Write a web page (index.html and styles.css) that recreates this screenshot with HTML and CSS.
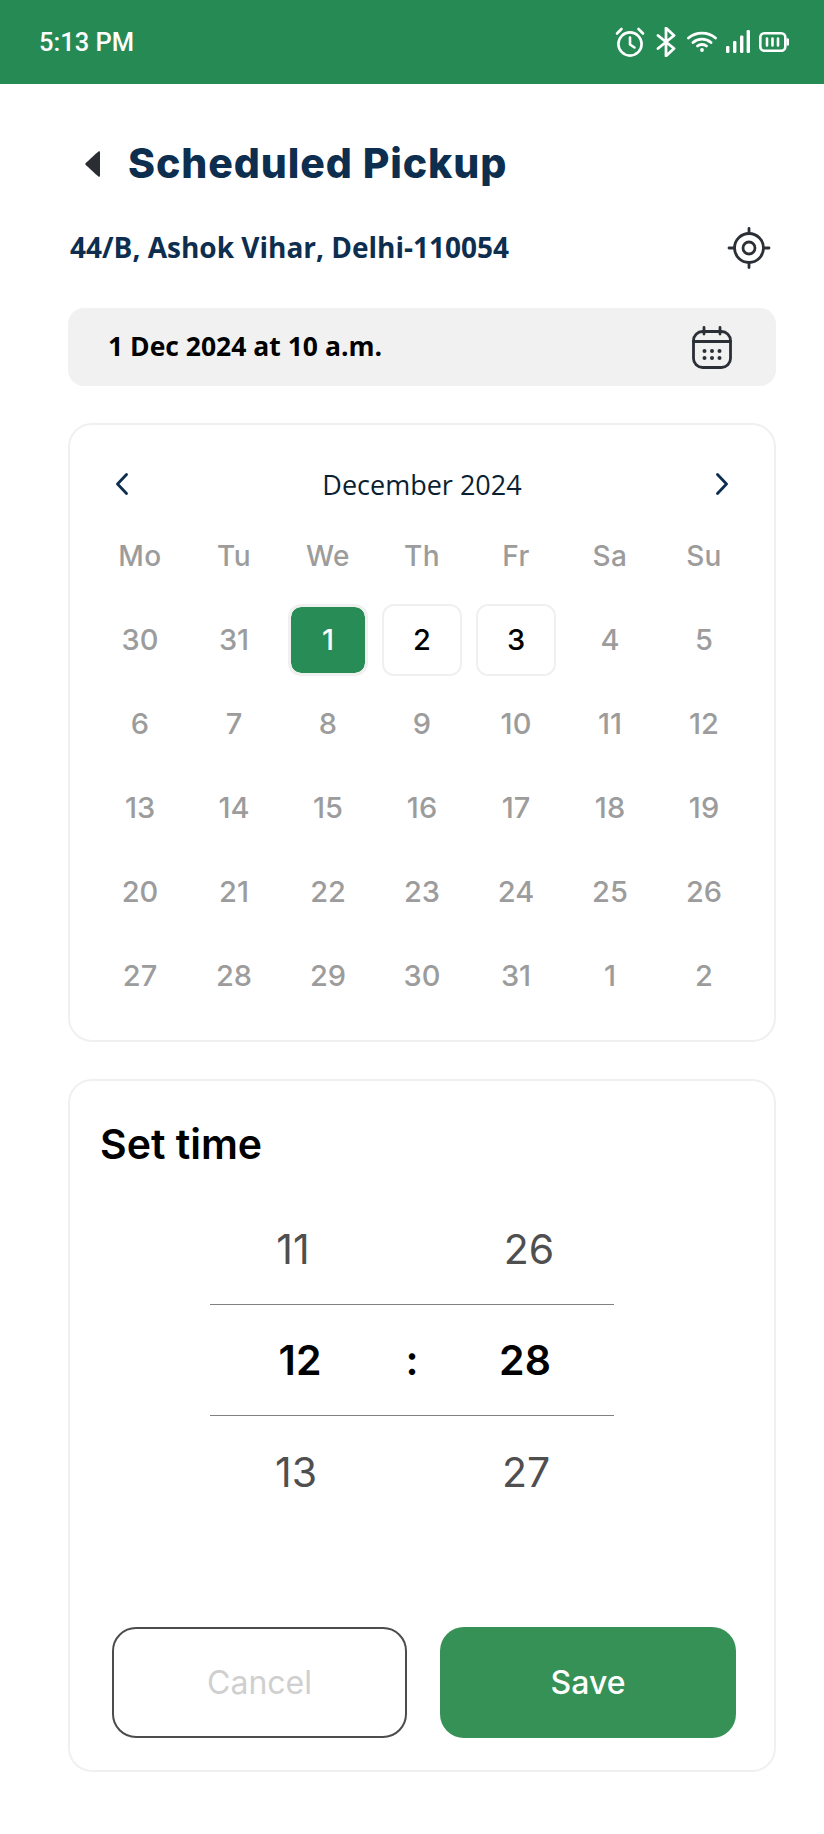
FILE: index.html
```html
<!DOCTYPE html>
<html lang="en">
<head>
<meta charset="utf-8">
<title>Scheduled Pickup</title>
<link rel="stylesheet" href="styles.css">
</head>
<body>
<div class="status">
  <span class="clock">5:13 PM</span>
  <div class="status-icons">
    <svg class="i-alarm" viewBox="0 0 30 30" fill="none" stroke="#fff" stroke-width="2.6" stroke-linecap="round" stroke-linejoin="round"><circle cx="15" cy="17" r="11.6"/><path d="M15 10.5V17.5L19.5 20.5M2 6.5L6.5 2M28 6.5L23.5 2"/></svg>
    <svg class="i-bt" viewBox="0 0 20 30" fill="none" stroke="#fff" stroke-width="2.8" stroke-linejoin="round" stroke-linecap="round"><path d="M2 8.5L18 21.5L10 29V1L18 8.5L2 21.5"/></svg>
    <svg class="i-wifi" viewBox="0 0 30 21" fill="none" stroke="#fff" stroke-width="2.8" stroke-linecap="round"><path d="M1.5 7C9 .5 21 .5 28.5 7M6 11.5C11 7 19 7 24 11.5M10.5 15C13 13 17 13 19.5 15"/><circle cx="15" cy="19" r="1.9" fill="#fff" stroke="none"/></svg>
    <svg class="i-signal" viewBox="0 0 24 23" fill="#fff"><rect x="0" y="16" width="3.4" height="7" rx="1.2"/><rect x="7" y="11" width="3.4" height="12" rx="1.2"/><rect x="14" y="5.500" width="3.400" height="17.500" rx="1.2"/><rect x="20.600" y="0" width="3.400" height="23" rx="1.2"/></svg>
    <svg class="i-batt" viewBox="0 0 30 20" fill="none" stroke="#fff" stroke-width="2.6" stroke-linecap="round"><rect x="1.3" y="1.300" width="25" height="17.400" rx="4"/><path d="M28.700 7.500V12.500M8 6.500V13.500M13.500 6.500V13.500M19 6.500V13.500"/></svg>
  </div>
</div>

<main class="page">
  <header class="title-row">
    <svg class="back" viewBox="0 0 15 28"><path d="M13.500 1.500C14.500 .8 15 1.500 15 2.500V25.500C15 26.500 14.500 27.200 13.500 26.500C11 24.500 3 17 .8 15C.2 14.300 .2 13.700 .8 13C3 11 11 3.500 13.500 1.500Z" fill="#2a2e33"/></svg>
    <h1 class="title">Scheduled Pickup</h1>
  </header>

  <div class="address-row">
    <span class="address">44/B, Ashok Vihar, Delhi-110054</span>
    <svg class="i-target" viewBox="0 0 44 42" fill="none" stroke="#2b2f36" stroke-width="2.800" stroke-linecap="round"><circle cx="22" cy="21" r="14.500"/><circle cx="22" cy="21" r="6"/><path d="M22 1.500V6.500M22 35.500V40.500M2 21H7.500M36.500 21H42"/></svg>
  </div>

  <div class="date-bar">
    <span class="date-text">1 Dec 2024 at 10 a.m.</span>
    <svg class="i-cal" viewBox="0 0 40 43" fill="none" stroke="#2b2f36" stroke-width="2.800" stroke-linecap="round"><rect x="1.500" y="5.500" width="37" height="36" rx="9"/><path d="M1.500 15.500H38.500M12 1.500V8M28 1.500V8"/><g fill="#2b2f36" stroke="none"><circle cx="12.500" cy="25" r="2"/><circle cx="20" cy="25" r="2"/><circle cx="27.500" cy="25" r="2"/><circle cx="12.500" cy="32" r="2"/><circle cx="20" cy="32" r="2"/><circle cx="27.500" cy="32" r="2"/></g></svg>
  </div>

  <section class="card calendar">
    <div class="month-row">
      <svg class="chev" viewBox="0 0 12 22" fill="none" stroke="#0d2e4f" stroke-width="2.800" stroke-linecap="round" stroke-linejoin="round"><path d="M10.500 1.500L1.500 11L10.500 20.500"/></svg>
      <span class="month">December 2024</span>
      <svg class="chev" viewBox="0 0 12 22" fill="none" stroke="#0d2e4f" stroke-width="2.800" stroke-linecap="round" stroke-linejoin="round"><path d="M1.500 1.500L10.500 11L1.500 20.500"/></svg>
    </div>
    <div class="weekdays">
      <span>Mo</span><span>Tu</span><span>We</span><span>Th</span><span>Fr</span><span>Sa</span><span>Su</span>
    </div>
    <div class="days">
      <span class="day">30</span><span class="day">31</span><span class="day selected">1</span><span class="day open">2</span><span class="day open">3</span><span class="day">4</span><span class="day">5</span>
      <span class="day">6</span><span class="day">7</span><span class="day">8</span><span class="day">9</span><span class="day">10</span><span class="day">11</span><span class="day">12</span>
      <span class="day">13</span><span class="day">14</span><span class="day">15</span><span class="day">16</span><span class="day">17</span><span class="day">18</span><span class="day">19</span>
      <span class="day">20</span><span class="day">21</span><span class="day">22</span><span class="day">23</span><span class="day">24</span><span class="day">25</span><span class="day">26</span>
      <span class="day">27</span><span class="day">28</span><span class="day">29</span><span class="day">30</span><span class="day">31</span><span class="day">1</span><span class="day">2</span>
    </div>
  </section>

  <section class="card time">
    <h2 class="time-title">Set time</h2>
    <div class="picker">
      <span class="n h-11">11</span><span></span><span class="n m-26">26</span>
      <span class="n now h-12">12</span><span class="now colon">:</span><span class="n now m-28">28</span>
      <span class="n h-13">13</span><span></span><span class="n m-27">27</span>
    </div>
    <div class="actions">
      <button class="btn cancel" type="button">Cancel</button>
      <button class="btn save" type="button">Save</button>
    </div>
  </section>
</main>
</body>
</html>
```

FILE: styles.css
```css
* { box-sizing: border-box; }
html, body { margin: 0; padding: 0; }
body {
  width: 824px;
  height: 1834px;
  background: #fff;
  font-family: "Inter", "Liberation Sans", sans-serif;
  overflow: hidden;
}

.status {
  height: 84px;
  background: #268a55;
  display: flex;
  align-items: center;
  justify-content: space-between;
  padding: 0 35px 0 39px;
  color: #fff;
}
.clock { font: 500 25.5px "Roboto", sans-serif; margin-top: -1px; }
.status-icons { display: flex; align-items: center; margin-top: -1px; }
.status-icons svg { display: block; flex: none; }
.i-alarm { width: 30px; height: 30px; margin-right: 11px; }
.i-bt { width: 20px; height: 30px; margin-right: 11px; }
.i-wifi { width: 30px; height: 21px; margin-right: 9px; }
.i-signal { width: 24px; height: 23px; margin-right: 9px; }
.i-batt { width: 30px; height: 20px; }

.page { padding: 0 48px 0 68px; }

.title-row {
  display: flex;
  align-items: center;
  height: 60px;
  margin-top: 50px;
  padding-left: 17px;
}
.back { width: 15px; height: 28px; flex: none; }
.title {
  margin: -3px 0 0 28px;
  font: 800 41px "Inter", sans-serif;
  letter-spacing: .9px;
  color: #0d2e4f;
}

.address-row {
  display: flex;
  align-items: center;
  justify-content: space-between;
  height: 44px;
  margin-top: 32px;
  padding: 0 5px 0 2px;
}
.address { font: 700 28px "Open Sans", sans-serif; color: #0d2e4f; margin-top: -2px; }
.i-target { width: 44px; height: 42px; flex: none; }

.date-bar {
  display: flex;
  align-items: center;
  justify-content: space-between;
  height: 78px;
  margin-top: 38px;
  padding: 0 44px 0 40px;
  background: #f1f1f1;
  border-radius: 16px;
}
.date-text { font: 700 26.5px "Open Sans", sans-serif; color: #000; margin-top: -3px; }
.i-cal { width: 40px; height: 43px; flex: none; }

.card {
  border: 2px solid #f0f0f0;
  border-radius: 24px;
  background: #fff;
}

.calendar {
  height: 619px;
  margin-top: 37px;
  padding: 34px 30px 0;
}
.month-row {
  display: flex;
  align-items: center;
  justify-content: space-between;
  height: 50px;
  padding: 0 16px;
}
.chev { width: 12px; height: 22px; flex: none; }
.month { font: 400 27px "Open Sans", sans-serif; color: #0b1f33; }

.weekdays, .days {
  display: grid;
  grid-template-columns: repeat(7, 80px);
  column-gap: 14px;
}
.weekdays {
  margin-top: 23px;
  height: 48px;
  align-items: center;
  text-align: center;
  font-size: 28px;
  font-weight: 500;
  letter-spacing: .4px;
  color: #9c9c9c;
}
.days {
  margin-top: 24px;
  grid-auto-rows: 72px;
  row-gap: 12px;
}
.day {
  display: flex;
  align-items: center;
  justify-content: center;
  font-size: 29px;
  font-weight: 500;
  color: #9c9c9c;
  border-radius: 12px;
  padding-bottom: 1px;
}
.day.open { color: #000; border: 2px solid #f0f0f0; }
.day.selected {
  color: #fff;
  background: #288c56;
  background-clip: padding-box;
  border: 3px solid #f0f0f0;
  border-radius: 13px;
}

.time {
  height: 693px;
  margin-top: 37px;
  padding: 40px 40px 0 42px;
}
.time-title {
  margin: 0 0 0 -12px;
  font: 600 41px/46px "Inter", sans-serif;
  color: #000;
}
.picker {
  display: grid;
  grid-template-columns: 172px 60px 172px;
  grid-template-rows: 111px 112px 111px;
  width: 404px;
  margin: 26px 0 0 98px;
  align-items: center;
  text-align: center;
  font-size: 41px;
  color: #4f4f4f;
}
.picker .now {
  height: 100%;
  display: flex;
  align-items: center;
  justify-content: center;
  color: #000;
  font-weight: 600;
  border-top: 1px solid #808080;
  border-bottom: 1px solid #808080;
}
.h-11 { padding-right: 6px; }
.h-12 { padding-left: 8px; }
.m-26 { padding-left: 2px; }
.m-28 { padding-right: 6px; }
.m-27 { padding-right: 4px; }

.actions {
  display: grid;
  grid-template-columns: 295px 296px;
  column-gap: 33px;
  margin-top: 100px;
}
.btn {
  height: 111px;
  border-radius: 24px;
  font: 500 32px "Inter", sans-serif;
}
.cancel { background: #fff; border: 2px solid #4c4c4c; color: #cfcfcf; font-weight: 400; }
.save { background: #359155; border: 0; color: #fff; }
```
